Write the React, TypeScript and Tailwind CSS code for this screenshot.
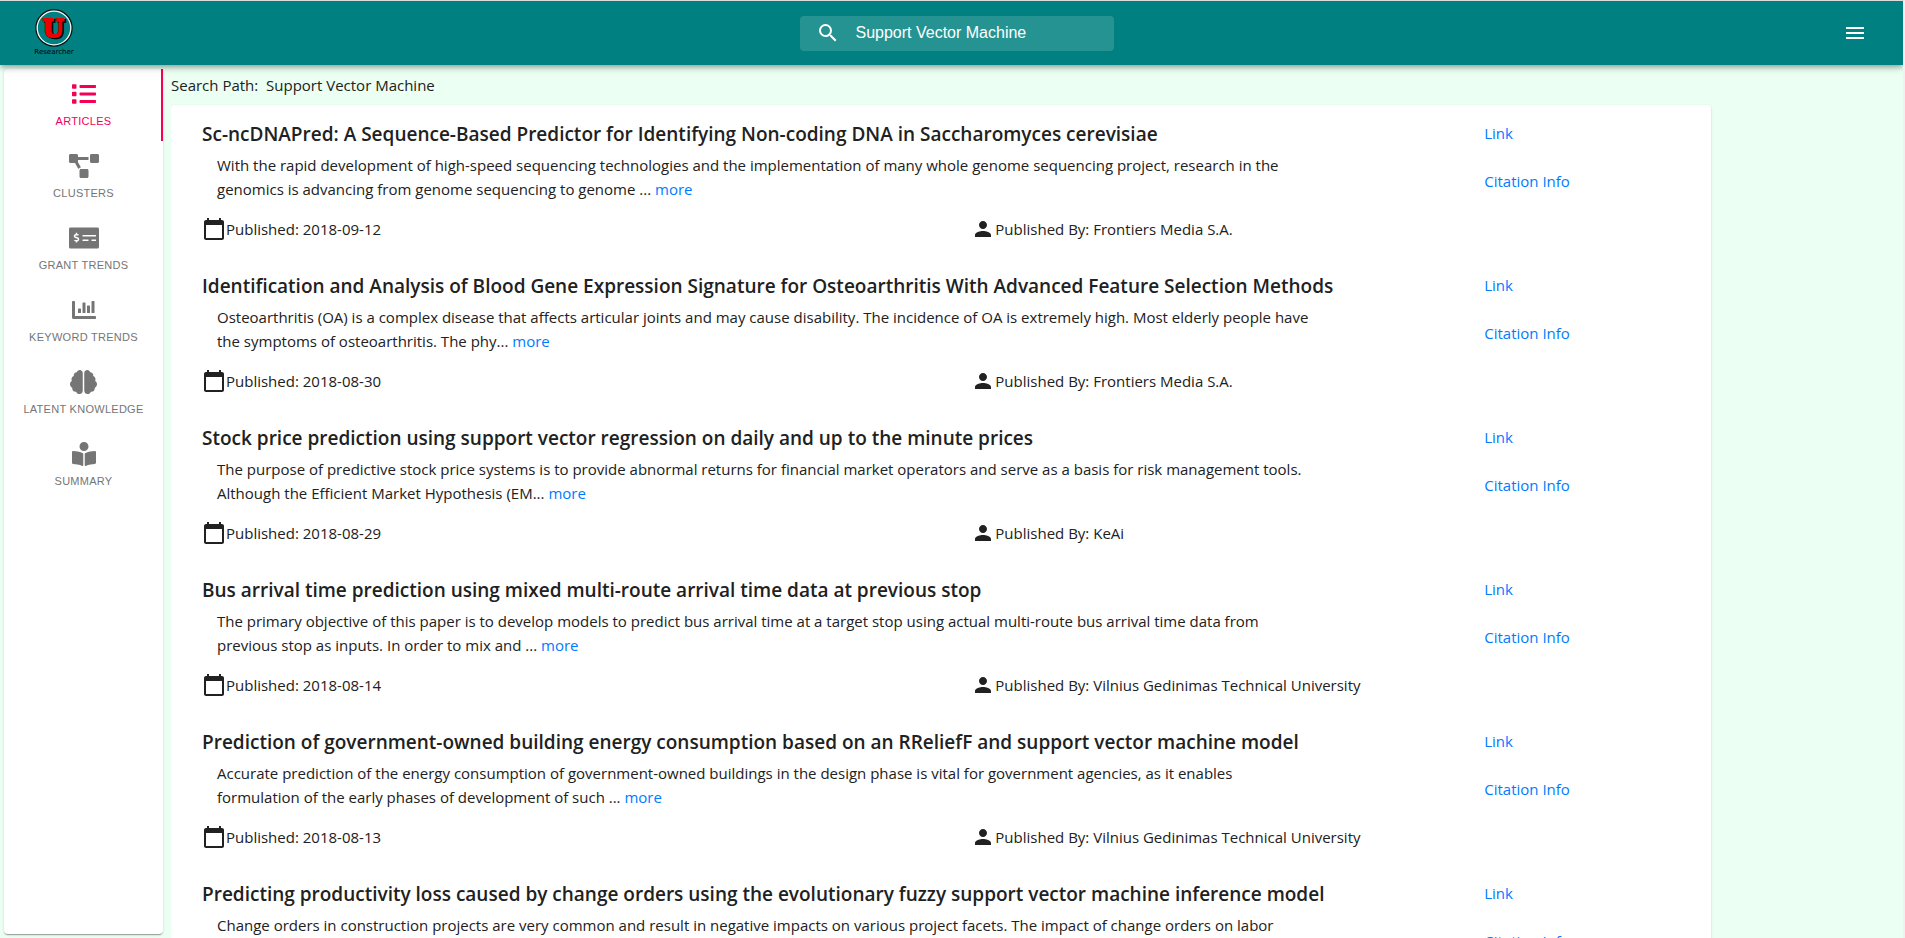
import React from 'react';
import {
  FaBookReader,
  FaBrain,
  FaChartBar,
  FaList,
  FaMoneyCheckAlt,
  FaProjectDiagram,
} from 'react-icons/fa';
import { MdMenu, MdPerson, MdSearch } from 'react-icons/md';

const tabs = [
  { label: 'Articles', Icon: FaList, size: 'h-6 w-6' },
  { label: 'Clusters', Icon: FaProjectDiagram, size: 'h-6 w-[30px]' },
  { label: 'Grant Trends', Icon: FaMoneyCheckAlt, size: 'h-6 w-[30px]' },
  { label: 'Keyword Trends', Icon: FaChartBar, size: 'h-6 w-6' },
  { label: 'Latent Knowledge', Icon: FaBrain, size: 'h-6 w-[27px]' },
  { label: 'Summary', Icon: FaBookReader, size: 'h-6 w-6' },
];

interface Article {
  title: string;
  lines: [string, string];
  date: string;
  publisher: string;
}

const articles: Article[] = [
  {
    title: 'Sc-ncDNAPred: A Sequence-Based Predictor for Identifying Non-coding DNA in Saccharomyces cerevisiae',
    lines: [
      'With the rapid development of high-speed sequencing technologies and the implementation of many whole genome sequencing project, research in the',
      'genomics is advancing from genome sequencing to genome ...',
    ],
    date: '2018-09-12',
    publisher: 'Frontiers Media S.A.',
  },
  {
    title: 'Identification and Analysis of Blood Gene Expression Signature for Osteoarthritis With Advanced Feature Selection Methods',
    lines: [
      'Osteoarthritis (OA) is a complex disease that affects articular joints and may cause disability. The incidence of OA is extremely high. Most elderly people have',
      'the symptoms of osteoarthritis. The phy...',
    ],
    date: '2018-08-30',
    publisher: 'Frontiers Media S.A.',
  },
  {
    title: 'Stock price prediction using support vector regression on daily and up to the minute prices',
    lines: [
      'The purpose of predictive stock price systems is to provide abnormal returns for financial market operators and serve as a basis for risk management tools.',
      'Although the Efficient Market Hypothesis (EM...',
    ],
    date: '2018-08-29',
    publisher: 'KeAi',
  },
  {
    title: 'Bus arrival time prediction using mixed multi-route arrival time data at previous stop',
    lines: [
      'The primary objective of this paper is to develop models to predict bus arrival time at a target stop using actual multi-route bus arrival time data from',
      'previous stop as inputs. In order to mix and ...',
    ],
    date: '2018-08-14',
    publisher: 'Vilnius Gedinimas Technical University',
  },
  {
    title: 'Prediction of government-owned building energy consumption based on an RReliefF and support vector machine model',
    lines: [
      'Accurate prediction of the energy consumption of government-owned buildings in the design phase is vital for government agencies, as it enables',
      'formulation of the early phases of development of such ...',
    ],
    date: '2018-08-13',
    publisher: 'Vilnius Gedinimas Technical University',
  },
  {
    title: 'Predicting productivity loss caused by change orders using the evolutionary fuzzy support vector machine inference model',
    lines: [
      'Change orders in construction projects are very common and result in negative impacts on various project facets. The impact of change orders on labor',
      '',
    ],
    date: '',
    publisher: '',
  },
];

function CalendarIcon() {
  return (
    <svg viewBox="0 0 24 24" className="size-6 shrink-0" fill="currentColor" aria-hidden="true">
      <path d="M20 3h-1V1h-2v2H7V1H5v2H4c-1.1 0-2 .9-2 2v16c0 1.1.9 2 2 2h16c1.1 0 2-.9 2-2V5c0-1.1-.9-2-2-2zm0 18H4V8h16v13z" />
    </svg>
  );
}

function Logo() {
  return (
    <a href="#home" className="flex w-10 flex-col items-center" aria-label="U Researcher">
      <svg viewBox="0 0 38 38" className="size-[38px]" aria-hidden="true">
        <circle cx="19" cy="19" r="18" fill="none" stroke="#111" strokeWidth="1.4" />
        <circle cx="19" cy="19" r="16.8" fill="#008080" stroke="#f4f4f4" strokeWidth="1.3" />
        <g fontFamily="DejaVu Serif, serif" fontWeight="700" fontSize="24" textAnchor="middle">
          <text x="20" y="28.5" fill="#000" stroke="#000" strokeWidth="2.4">U</text>
          <text x="18.2" y="28" fill="#ee0000" stroke="#ee0000" strokeWidth="2">U</text>
        </g>
      </svg>
      <span className="font-['DejaVu_Sans'] text-[7px] leading-[10px] text-black">Researcher</span>
    </a>
  );
}

function Header() {
  return (
    <header className="relative z-10 flex h-16 shrink-0 items-center bg-[#008080] pr-6 pl-[34px] text-white shadow-[0_2px_4px_-1px_rgba(0,0,0,0.2),0_4px_5px_0_rgba(0,0,0,0.14),0_1px_10px_0_rgba(0,0,0,0.12)]">
      <div className="flex flex-1 items-center">
        <Logo />
      </div>
      <label className="flex h-[35px] w-[314px] items-center gap-4 rounded bg-white/15 pl-4">
        <MdSearch className="size-6 shrink-0" aria-hidden="true" />
        <input
          type="text"
          aria-label="Search"
          defaultValue="Support Vector Machine"
          className="min-w-0 flex-1 bg-transparent font-['Liberation_Sans'] text-base outline-none"
        />
      </label>
      <div className="flex flex-1 justify-end">
        <button type="button" aria-label="Menu" className="pr-3">
          <MdMenu className="size-6" />
        </button>
      </div>
    </header>
  );
}

function Sidebar() {
  return (
    <nav className="mt-1 mb-1 ml-1 w-[159px] shrink-0 rounded bg-white font-['Liberation_Sans'] shadow-[0_2px_1px_-1px_rgba(0,0,0,0.2),0_1px_1px_0_rgba(0,0,0,0.14),0_1px_3px_0_rgba(0,0,0,0.12)]">
      {tabs.map(({ label, Icon, size }, i) => (
        <button
          key={label}
          type="button"
          className={
            i === 0
              ? 'flex h-[72px] w-full flex-col items-center gap-[7px] pt-[13px] text-[#f50057] shadow-[inset_-2px_0_0_#f50057]'
              : 'flex h-[72px] w-full flex-col items-center gap-[7px] pt-[13px] text-[#757575]'
          }
        >
          <Icon className={size} aria-hidden="true" />
          <span className="text-[11px] leading-4 tracking-wide whitespace-nowrap uppercase">{label}</span>
        </button>
      ))}
    </nav>
  );
}

function ArticleRow({ title, lines, date, publisher }: Article) {
  return (
    <article className="flex h-[152px]">
      <div className="w-[85%] shrink-0">
        <h2 className="text-[19px] leading-[30px] font-semibold whitespace-nowrap">{title}</h2>
        <p className="mt-1 pl-[15px] whitespace-nowrap">
          {lines[0]}
          {lines[1] && (
            <>
              <br />
              {lines[1]} <a href="#more" className="text-[#007bff]">more</a>
            </>
          )}
        </p>
        {date && (
          <div className="mt-4 flex">
            <div className="flex w-3/5 shrink-0">
              <CalendarIcon />
              <span>Published: {date}</span>
            </div>
            <div className="flex">
              <MdPerson className="size-6 shrink-0" aria-hidden="true" />
              <span className="whitespace-nowrap">Published By: {publisher}</span>
            </div>
          </div>
        )}
      </div>
      <div className="flex flex-col items-start gap-6 pt-[2px] text-[#007bff]">
        <a href="#link">Link</a>
        <a href="#citation">Citation Info</a>
      </div>
    </article>
  );
}

export default function App() {
  return (
    <div className="flex h-screen flex-col overflow-hidden border-t border-r-2 border-t-[#d9dddd] border-r-[#f1f1f1] bg-[#ebfff2] font-['Open_Sans',sans-serif] text-[15px] leading-6 text-[#212121]">
      <Header />
      <div className="flex min-h-0 flex-1">
        <Sidebar />
        <main className="ml-2 min-w-0 flex-1 overflow-hidden">
          <p className="pt-2 pb-2 whitespace-pre">Search Path:  Support Vector Machine</p>
          <section className="w-8/9 rounded bg-white pt-[14px] pl-[31px] shadow-[0_2px_1px_-1px_rgba(0,0,0,0.2),0_1px_1px_0_rgba(0,0,0,0.14),0_1px_3px_0_rgba(0,0,0,0.12)]">
            {articles.map((a) => (
              <ArticleRow key={a.title} {...a} />
            ))}
          </section>
        </main>
      </div>
    </div>
  );
}
